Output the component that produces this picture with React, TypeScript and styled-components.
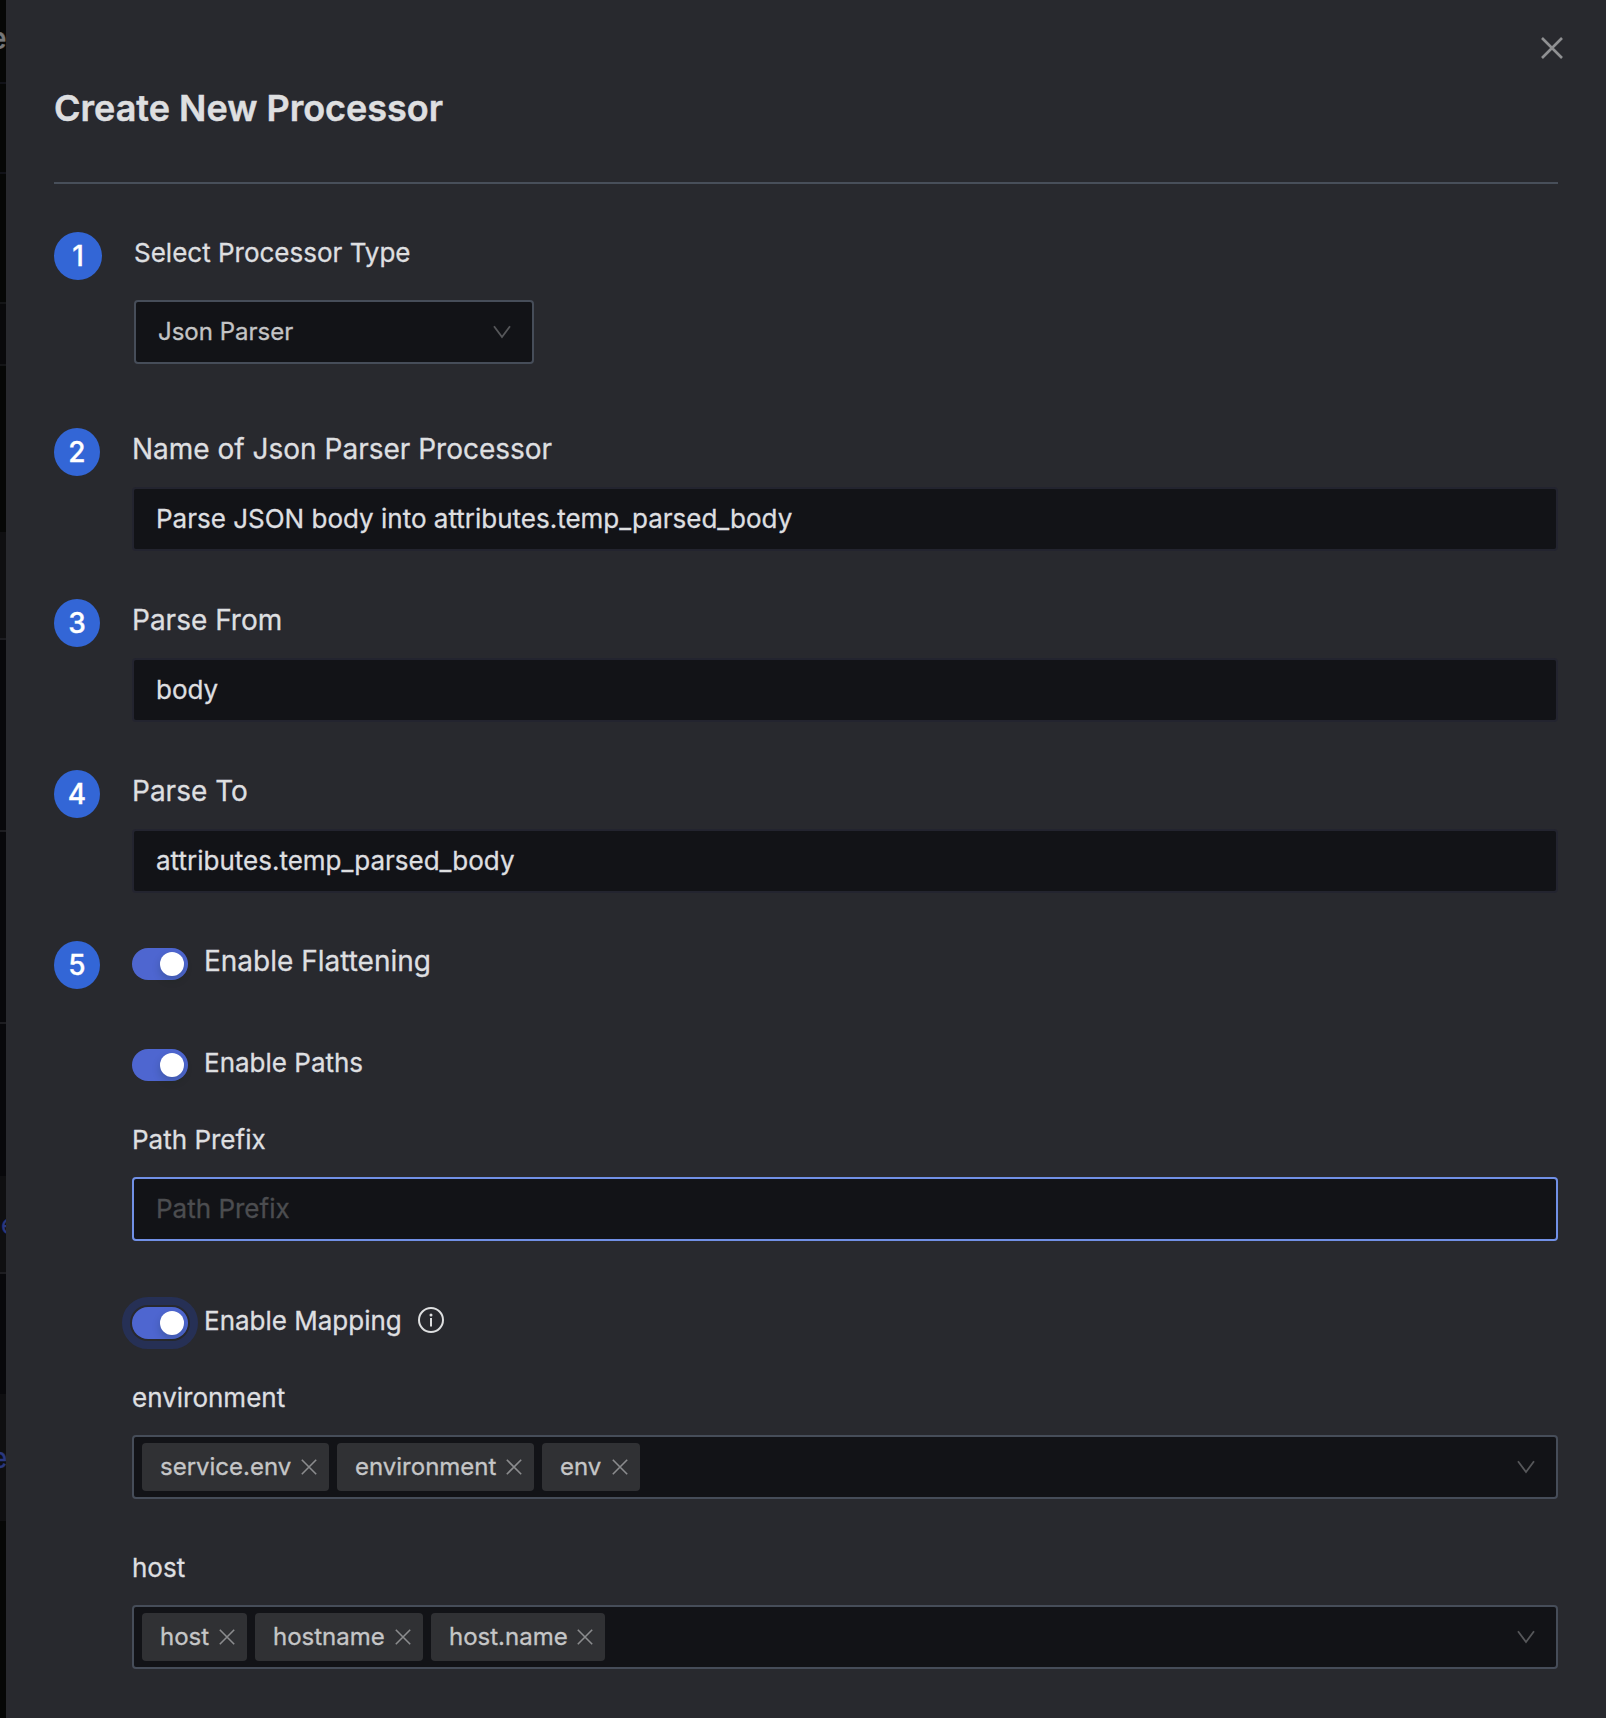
import React from 'react';
import styled, { createGlobalStyle, css } from 'styled-components';

const GlobalStyle = createGlobalStyle`
  * { box-sizing: border-box; }
  html, body { margin: 0; background: #060707; }
  body {
    font-family: Inter, "Liberation Sans", sans-serif;
    color: #dedfe0;
    overflow: hidden;
    -webkit-text-stroke: 0.3px currentColor;
  }
`;

const Screen = styled.div`
  display: flex;
  width: 1606px;
  height: 1718px;
  overflow: hidden;
`;

const Backdrop = styled.div`
  width: 6px;
  flex: none;
  overflow: hidden;
  display: flex;
  flex-direction: column;
`;

const Strip = styled.div<{ $h: number; $bg: string; $line?: string }>`
  height: ${(p) => p.$h}px;
  flex: none;
  background: ${(p) => p.$bg};
  border-bottom: ${(p) => (p.$line ? `2px solid ${p.$line}` : '0')};
  overflow: hidden;
`;

const Letter = styled.div<{ $size: number; $color: string; $top: number; $left: number; $weight?: number }>`
  font-size: ${(p) => p.$size}px;
  line-height: ${(p) => p.$size}px;
  font-weight: ${(p) => p.$weight ?? 400};
  color: ${(p) => p.$color};
  margin: ${(p) => p.$top}px 0 0 ${(p) => p.$left}px;
`;

const Drawer = styled.main`
  flex: 1;
  background: #28292e;
  padding: 0 48px;
`;

const Header = styled.header`
  height: 184px;
  border-bottom: 2px solid #484f5a;
  display: flex;
  flex-direction: column;
`;

const CloseButton = styled.button`
  all: unset;
  align-self: flex-end;
  display: flex;
  margin: 37px -5px 0 0;
  color: #8f9092;
`;

const Title = styled.h1`
  margin: 27px 0 0;
  font-size: 36px;
  line-height: 44px;
  font-weight: 600;
  white-space: nowrap;
  -webkit-text-stroke: 0.5px currentColor;
`;

const Step = styled.section<{ $h: number; $gap: number }>`
  display: flex;
  align-items: flex-start;
  gap: ${(p) => p.$gap}px;
  height: ${(p) => p.$h}px;
`;

const Steps = styled.div`
  padding-top: 48px;
`;

const Badge = styled.div<{ $w: number }>`
  width: ${(p) => p.$w}px;
  height: 48px;
  flex: none;
  border-radius: 50%;
  background: #3366d6;
  color: #fff;
  font-size: 28px;
  line-height: 48px;
  font-weight: 500;
  text-align: center;
`;

const Body = styled.div`
  flex: 1;
  min-width: 0;
`;

const StepLabel = styled.div<{ $mb: number; $size?: number }>`
  font-size: ${(p) => p.$size ?? 28}px;
  line-height: 44px;
  height: 44px;
  margin: -1px 0 ${(p) => p.$mb}px;
  white-space: nowrap;
`;

const FieldLabel = styled.div`
  font-size: 26px;
  line-height: 44px;
  height: 44px;
  white-space: nowrap;
`;

const fieldBox = css`
  height: 64px;
  border-radius: 4px;
  background: #121317;
  font-family: inherit;
`;

const Input = styled.input<{ $focused?: boolean }>`
  ${fieldBox}
  display: block;
  width: 100%;
  margin: 0;
  padding: 0 22px 2px;
  outline: none;
  font-size: 26px;
  -webkit-text-stroke: inherit;
  border: 2px solid ${(p) => (p.$focused ? '#7190e6' : '#23242f')};
  color: #dedfe0;
  &::placeholder { color: #4c4d50; opacity: 1; -webkit-text-stroke: 0.3px #4c4d50; }
`;

const TypeSelect = styled.div`
  ${fieldBox}
  width: 400px;
  padding: 0 21px 0 22px;
  border: 2px solid #464d59;
  display: flex;
  align-items: center;
  justify-content: space-between;
  font-size: 24px;
  color: #c3c4c5;
`;

const TagSelect = styled.div`
  ${fieldBox}
  border: 2px solid #464d59;
  display: flex;
  align-items: center;
  gap: 8px;
  padding: 0 21px 0 8px;
`;

const Tag = styled.span<{ $w: number }>`
  width: ${(p) => p.$w}px;
  height: 48px;
  border-radius: 4px;
  background: #303134;
  color: #c5c6c7;
  font-size: 24px;
  display: flex;
  align-items: center;
  justify-content: space-between;
  padding: 0 12px 0 18px;
  white-space: nowrap;
`;

const ValueText = styled.span`
  padding-bottom: 2px;
`;

const Spacer = styled.span`
  flex: 1;
`;

const SwitchRow = styled.div<{ $size: number; $mb: number; $mt?: number }>`
  display: flex;
  align-items: center;
  height: 48px;
  margin: ${(p) => p.$mt ?? 0}px 0 ${(p) => p.$mb}px;
  font-size: ${(p) => p.$size}px;
  white-space: nowrap;
`;

const SwitchTrack = styled.button<{ $focused?: boolean }>`
  all: unset;
  box-sizing: border-box;
  width: 56px;
  height: 32px;
  padding: 4px;
  margin-right: 16px;
  border-radius: 16px;
  background: #4e66d0;
  display: flex;
  justify-content: flex-end;
  ${(p) => p.$focused && css`outline: 8px solid #263055; outline-offset: 2px;`}
`;

const Knob = styled.span`
  width: 24px;
  height: 24px;
  border-radius: 50%;
  background: #fff;
  box-shadow: 0 4px 8px rgba(0, 35, 11, 0.2);
`;

const SwitchLabel = styled.span`
  padding-bottom: 6px;
`;

const InfoSlot = styled.span`
  display: flex;
  margin: 0 0 6px 16px;
`;

const Group = styled.div<{ $mb: number }>`
  margin-bottom: ${(p) => p.$mb}px;
`;

const Gap = styled.div<{ $h: number }>`
  height: ${(p) => p.$h}px;
`;

const Cross = ({ size, weight }: { size: number; weight: number }) => (
  <svg width={size} height={size} viewBox={`0 0 ${size} ${size}`} fill="none" stroke="currentColor" strokeWidth={weight}>
    <path d={`M1 1L${size - 1} ${size - 1}M${size - 1} 1L1 ${size - 1}`} />
  </svg>
);

const TagCross = () => (
  <svg width="16" height="16" viewBox="0 0 16 16" fill="none" stroke="#8b8c8e" strokeWidth="1.6">
    <path d="M0.8 0.8L15.2 15.2M15.2 0.8L0.8 15.2" />
  </svg>
);

const Chevron = () => (
  <svg width="18" height="14" viewBox="0 0 18 14" fill="none" stroke="#56575a" strokeWidth="1.8">
    <path d="M1 1.2L9 12L17 1.2" />
  </svg>
);

const Info = () => (
  <svg width="26" height="26" viewBox="0 0 26 26" fill="none" stroke="#dedfe0" strokeWidth="2">
    <circle cx="13" cy="13" r="12" />
    <path d="M13 11V19.5" />
    <circle cx="13" cy="8" r="1.5" fill="#dedfe0" stroke="none" />
  </svg>
);

const Tags = ({ items }: { items: [string, number][] }) => (
  <TagSelect>
    {items.map(([name, w]) => (
      <Tag key={name} $w={w}>
        <ValueText>{name}</ValueText>
        <TagCross />
      </Tag>
    ))}
    <Spacer />
    <Chevron />
  </TagSelect>
);

const fields = [
  { n: 2, label: 'Name of Json Parser Processor', value: 'Parse JSON body into attributes.temp_parsed_body' },
  { n: 3, label: 'Parse From', value: 'body' },
  { n: 4, label: 'Parse To', value: 'attributes.temp_parsed_body' },
];

export default function App() {
  return (
    <Screen>
      <GlobalStyle />
      <Backdrop>
        <Strip $h={84} $bg="#060706" $line="#111218">
          <Letter $size={30} $color="#77787a" $top={23} $left={-11} $weight={500}>e</Letter>
        </Strip>
        <Strip $h={90} $bg="#060706" $line="#111218" />
        <Strip $h={130} $bg="#060706" $line="#141517" />
        <Strip $h={62} $bg="#09090b" $line="#141517" />
        <Strip $h={166} $bg="#060706" />
        <Strip $h={108} $bg="#0f0f11" $line="#1d1d21" />
        <Strip $h={192} $bg="#08080b" $line="#1d1d21" />
        <Strip $h={192} $bg="#08080b" $line="#1d1d21" />
        <Strip $h={152} $bg="#08080b" />
        <Strip $h={98} $bg="#0f0f11" $line="#1d1d21">
          <Letter $size={26} $color="#2a3880" $top={36} $left={1}>e</Letter>
        </Strip>
        <Strip $h={120} $bg="#08080b" />
        <Strip $h={127} $bg="#0f0f11">
          <Letter $size={28} $color="#2a3880" $top={50} $left={-9}>e</Letter>
        </Strip>
        <Strip $h={197} $bg="#060706" />
      </Backdrop>
      <Drawer>
        <Header>
          <CloseButton aria-label="Close">
            <Cross size={22} weight={2.6} />
          </CloseButton>
          <Title>Create New Processor</Title>
        </Header>
        <Steps>
          <Step $h={196} $gap={32}>
            <Badge $w={48}>1</Badge>
            <Body>
              <StepLabel $mb={25} $size={26}>Select Processor Type</StepLabel>
              <TypeSelect>
                <ValueText>Json Parser</ValueText>
                <Chevron />
              </TypeSelect>
            </Body>
          </Step>
          {fields.map((f) => (
            <Step key={f.n} $h={171} $gap={32}>
              <Badge $w={46}>{f.n}</Badge>
              <Body>
                <StepLabel $mb={16}>{f.label}</StepLabel>
                <Input defaultValue={f.value} />
              </Body>
            </Step>
          ))}
          <Step $h={777} $gap={32}>
            <Badge $w={46}>5</Badge>
            <Body>
              <SwitchRow $size={28} $mt={-1} $mb={53}>
                <SwitchTrack aria-label="Enable Flattening"><Knob /></SwitchTrack>
                <SwitchLabel>Enable Flattening</SwitchLabel>
              </SwitchRow>
              <SwitchRow $size={26} $mb={29}>
                <SwitchTrack aria-label="Enable Paths"><Knob /></SwitchTrack>
                <SwitchLabel>Enable Paths</SwitchLabel>
              </SwitchRow>
              <Group $mb={58}>
                <FieldLabel>Path Prefix</FieldLabel>
                <Gap $h={15} />
                <Input $focused placeholder="Path Prefix" />
              </Group>
              <SwitchRow $size={26} $mb={29}>
                <SwitchTrack $focused aria-label="Enable Mapping"><Knob /></SwitchTrack>
                <SwitchLabel>Enable Mapping</SwitchLabel>
                <InfoSlot><Info /></InfoSlot>
              </SwitchRow>
              <Group $mb={47}>
                <FieldLabel>environment</FieldLabel>
                <Gap $h={15} />
                <Tags items={[['service.env', 187], ['environment', 197], ['env', 98]]} />
              </Group>
              <Group $mb={0}>
                <FieldLabel>host</FieldLabel>
                <Gap $h={15} />
                <Tags items={[['host', 105], ['hostname', 168], ['host.name', 174]]} />
              </Group>
            </Body>
          </Step>
        </Steps>
      </Drawer>
    </Screen>
  );
}
